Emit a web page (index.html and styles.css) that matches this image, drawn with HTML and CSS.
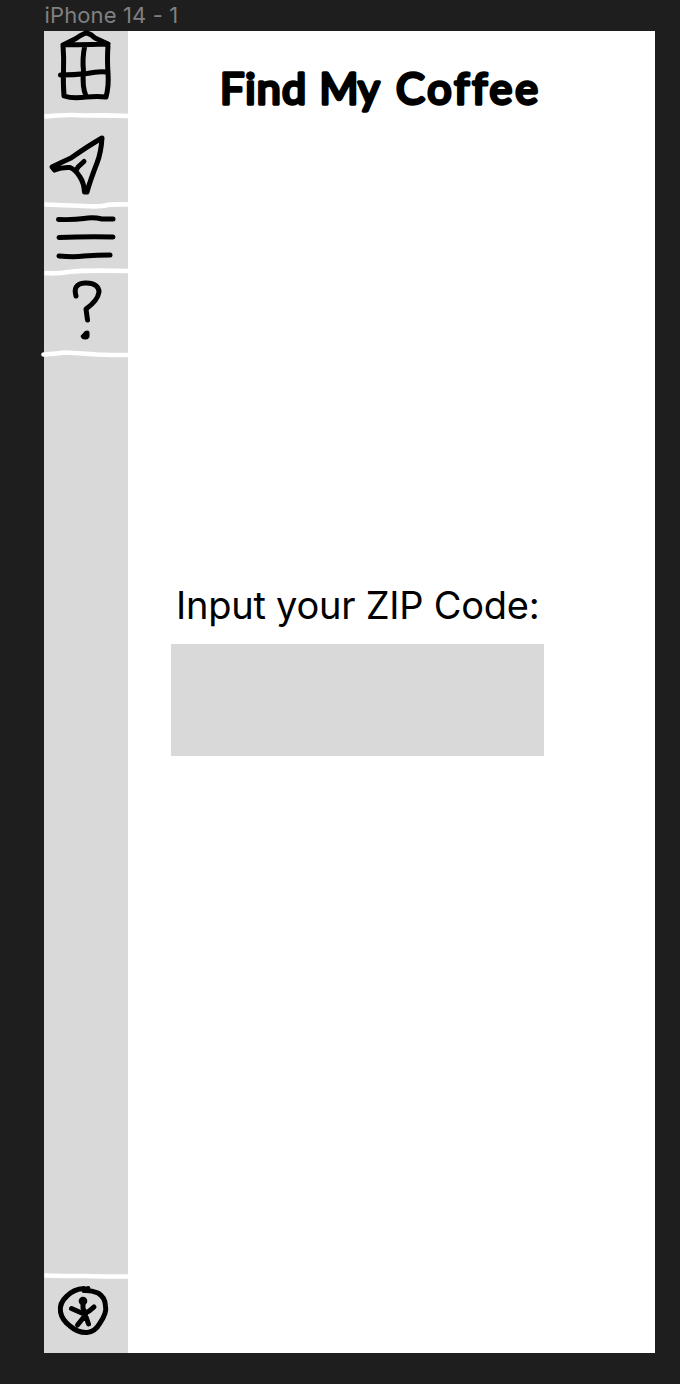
FILE: index.html
```html
<!DOCTYPE html>
<html lang="en">
<head>
<meta charset="utf-8">
<title>Find My Coffee</title>
<link rel="stylesheet" href="styles.css">
</head>
<body>
<div class="frame-label"><span class="frame-name">iPhone 14 - 1</span></div>
<div class="frame">
  <nav class="sidebar">
    <a class="item home" aria-label="Home">
      <svg viewBox="44 31 84 85">
        <path class="ink" d="M63 45 Q64 58 63.500 71 Q63 82 64 96 Q73 99 86 97 Q98 96 106 97 Q109 86 108 73 Q107 58 108 46 L105 44 Q85 45 64 44.500 M63 45 L76 38.500 Q84 33 87 33 Q91 34 95 38 L108 44 M85 45 Q82 58 83.500 71 Q82 87 86 96 M60.500 75 Q74 75 87 73.500 Q99 71 106 72"/>
        <path class="rule" d="M44.500 116.500 Q66 114 86 115.500 Q108 115 128 116"/>
      </svg>
    </a>
    <a class="item locate" aria-label="Locate">
      <svg viewBox="44 116 84 89">
        <path class="ink" d="M54.500 170 L52 167 Q62 162 71 158 Q88 146 102 138 Q101 153 97 163 Q90 181 87 192 L84.500 192 Q84 183 80 177 Q76 170 70 167.500 Q62 167 54.500 170 M76 171 L78 167 L84 161.500"/>
        <path class="rule" d="M44.500 204.500 Q64 205 84 206 Q101 207 107 205 Q111 204 128 204.500"/>
      </svg>
    </a>
    <a class="item menu" aria-label="Menu">
      <svg viewBox="44 205 84 66">
        <path class="ink" d="M58.500 219.500 Q74 220 84 218.500 Q93 217 102 219 L113 219 M59 237.500 Q85 236.500 113 237 M59 256 Q74 257.500 84 256 Q97 255 110 255"/>
        <path class="rule" d="M44.500 273 Q57 274 68 272 Q85 270 128 271"/>
      </svg>
    </a>
    <a class="item help" aria-label="Help">
      <svg viewBox="44 271 84 83">
        <path class="ink" d="M76 296 C74 289 75.500 283.500 85 283 C95 282.500 99 287 99 292 C98 299 93 304 86 309 L87.500 320"/>
        <path class="dot" d="M80.500 336 L85 331 Q89 329.500 89.500 332 L89.500 337 Q88 340 85 339.500 Q81.500 339.500 80.500 336Z"/>
        <path class="rule cap" d="M43.500 354.500 Q58 353.500 65 352.500 Q83 353.500 97 354.500 Q112 355 128 355"/>
      </svg>
    </a>
    <a class="item access" aria-label="Accessibility">
      <svg viewBox="44 1276 84 77">
        <path class="rule" d="M44.500 1275.500 Q65 1276 85 1276 Q105 1276.500 128 1276.500"/>
        <path class="ink" d="M84 1288.500 Q74 1289 67 1296 Q59 1303 60.500 1312 Q62 1320 70 1326 Q78 1333 87 1332.500 Q95 1332 100 1323 Q107 1313 105.500 1306 Q105 1297 98 1293 Q91 1290 84 1290.500 L88 1288.500 M83 1300.500 L83 1308 L85 1314 L88.500 1324 M71.500 1308.500 L84 1314 Q90 1311 94 1307 M77.500 1325 L85.500 1315"/>
        <circle class="dot" cx="83" cy="1301" r="4.300"/>
      </svg>
    </a>
  </nav>
  <main class="screen">
    <h1 class="title">
      <svg class="title-art" viewBox="210 55 340 70">
        <text x="220" y="103.500" textLength="86" lengthAdjust="spacing">Find</text>
        <text x="319.500" y="103.500" textLength="60" lengthAdjust="spacingAndGlyphs">My</text>
        <text x="396" y="103.500" textLength="142" lengthAdjust="spacing">Coffee</text>
      </svg>
    </h1>
    <label class="zip-label" for="zip">Input your ZIP Code:</label>
    <input class="zip" id="zip" type="text">
  </main>
</div>
</body>
</html>
```
FILE: styles.css
```css
* { box-sizing: border-box; }
body {
  margin: 0;
  height: 1384px;
  padding-left: 44px;
  background: #1e1e1e;
  font-family: Inter, "Liberation Sans", sans-serif;
  overflow: hidden;
}
.frame-label {
  height: 31px;
  padding-left: 0.5px;
  color: #808080;
  font-size: 22px;
  line-height: 31px;
  letter-spacing: 0.13px;
  white-space: nowrap;
}
.frame {
  display: flex;
  width: 611px;
  height: 1322px;
  background: #fff;
}
.sidebar {
  display: flex;
  flex-direction: column;
  width: 84px;
  background: #d9d9d9;
}
.item { display: block; flex: none; }
.item svg {
  display: block;
  width: 84px;
  height: 100%;
  overflow: visible;
}
.home { height: 85px; }
.locate { height: 89px; }
.menu { height: 66px; }
.help { height: 83px; }
.access { height: 77px; margin-top: auto; }
.ink, .rule {
  fill: none;
  stroke: #000;
  stroke-width: 5px;
  stroke-linecap: round;
  stroke-linejoin: round;
}
.rule { stroke: #fff; stroke-width: 4.6px; stroke-linecap: butt; }
.cap { stroke-linecap: round; }
.dot { fill: #000; }
.screen {
  display: flex;
  flex: 1;
  flex-direction: column;
  align-items: flex-start;
  padding: 24px 0 0 43px;
}
.title {
  width: 340px;
  height: 70px;
  margin: 0 0 0 39px;
}
.title-art {
  display: block;
  width: 340px;
  height: 70px;
  font-family: Lato, Inter, sans-serif;
  font-size: 43px;
  font-weight: 400;
  font-variant-ligatures: none;
  stroke: #000;
  stroke-width: 3.4px;
  stroke-linecap: round;
  stroke-linejoin: round;
}
.zip-label {
  height: 46px;
  margin: 457px 0 0 5px;
  font-size: 38px;
  line-height: 46px;
  letter-spacing: -0.25px;
  white-space: nowrap;
}
.zip {
  width: 373px;
  height: 112px;
  margin-top: 16px;
  padding: 0 16px;
  border: 0;
  background: #d9d9d9;
  font: inherit;
  font-size: 38px;
}
```
